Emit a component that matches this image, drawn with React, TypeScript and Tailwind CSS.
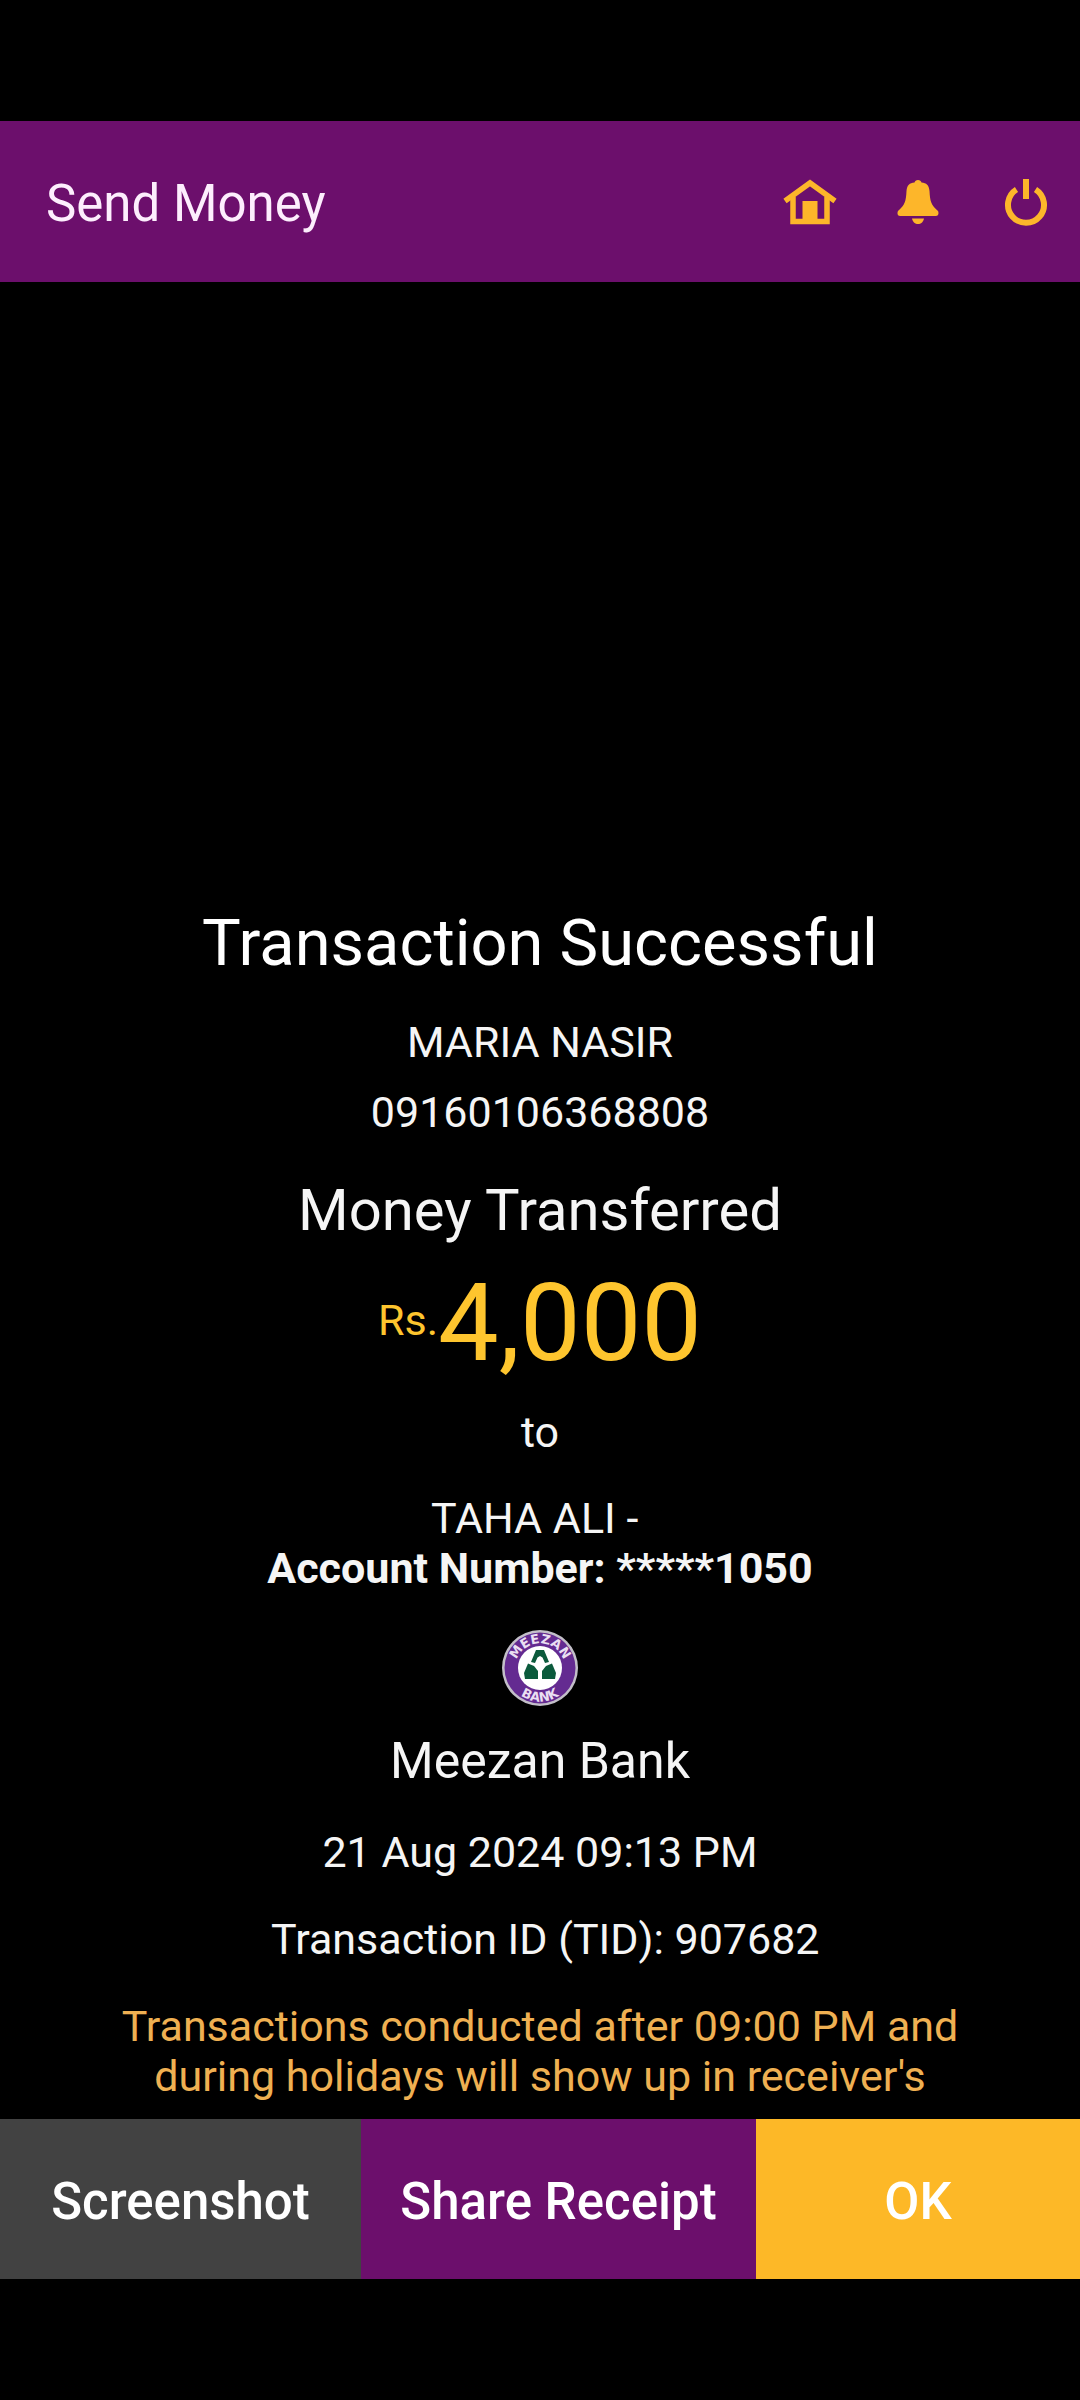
import React from 'react';

function HomeIcon() {
  return (
    <svg viewBox="0 0 54 46" className="h-[46px] w-[54px]" fill="none" aria-hidden="true">
      <path d="M2 22 L27 4 L52 22" stroke="#fdb62a" strokeWidth="5.5" strokeLinejoin="miter" />
      <path d="M10 18 V42.5 H44 V18" stroke="#fdb62a" strokeWidth="5.5" />
      <rect x="19.5" y="22" width="15" height="22" fill="#fdb62a" />
    </svg>
  );
}

function BellIcon() {
  return (
    <svg viewBox="0 0 42 46" className="h-[46px] w-[42px]" fill="#fdb62a" aria-hidden="true">
      <path d="M21 1 C23 1 24 2 24.500 3.500 C29.500 4 32 6 32.500 12 C33 22 34 26 41 32 C42 34 41.500 37 39 37 H3 C0.500 37 0 34 1 32 C8 26 9 22 9.500 12 C10 6 12.500 4 17.500 3.500 C18 2 19 1 21 1 Z" />
      <path d="M15 39.500 H27 C26 43.500 24 45 21 45 C18 45 16 43.500 15 39.500 Z" />
    </svg>
  );
}

function PowerIcon() {
  return (
    <svg viewBox="0 0 44 48" className="h-12 w-11" fill="none" stroke="#fdb62a" strokeWidth="6" aria-hidden="true">
      <path d="M22 1 V21" />
      <path d="M12.500 11.500 A18 18 0 1 0 31.500 11.500" />
    </svg>
  );
}

function BankLogo() {
  return (
    <svg viewBox="0 0 78 78" className="h-[78px] w-[78px]" role="img" aria-label="Meezan Bank">
      <defs>
        <path id="ring-top" d="M20.300 55.200 A24.700 24.700 0 1 1 57.700 55.200" />
        <path id="ring-bottom" d="M5.500 39 A33.500 33.500 0 0 0 72.500 39" />
      </defs>
      <circle cx="39" cy="39" r="38" fill="#c3bfc9" />
      <circle cx="39" cy="39" r="35.500" fill="#642b91" />
      <circle cx="39" cy="39" r="22" fill="#ffffff" />
      <g fill="#0b5a3c">
        <path d="M35 21 H43 L48 33 L44 34 L41.500 28.500 L39 27 L36.500 28.500 L34 34 L30 33 Z" />
        <path d="M27 34.500 L33 37 L37 42 V50 H24 L23 44 Z" />
        <path d="M51 34.500 L45 37 L41 42 V50 H54 L55 44 Z" />
      </g>
      <g fill="#eadff2" fontFamily="DejaVu Sans, sans-serif" fontWeight="700" textAnchor="middle">
        <text fontSize="13">
          <textPath href="#ring-top" startOffset="50%">MEEZAN</textPath>
        </text>
        <text fontSize="13">
          <textPath href="#ring-bottom" startOffset="50%">BANK</textPath>
        </text>
      </g>
    </svg>
  );
}

const iconButton = 'flex h-[60px] w-[60px] items-center justify-center';

export default function App() {
  return (
    <div className="flex min-h-screen flex-col bg-black py-[121px] font-[Roboto,sans-serif] text-[#f5f5f5]">
      <header className="flex h-[161px] items-center justify-between bg-[#6c0f6c] pr-6 pl-[46px]">
        <h1 className="pt-1 text-[51px] leading-[60px] text-[#fdeefd]">Send Money</h1>
        <nav className="flex gap-12">
          <button type="button" aria-label="Home" className={iconButton}>
            <HomeIcon />
          </button>
          <button type="button" aria-label="Notifications" className={iconButton}>
            <BellIcon />
          </button>
          <button type="button" aria-label="Log out" className={iconButton}>
            <PowerIcon />
          </button>
        </nav>
      </header>

      <main className="flex flex-1 flex-col items-center justify-end px-[72px] pb-[18px] text-center text-[43px] leading-[50px]">
        <h2 className="text-[65px] leading-[76px] text-white">Transaction Successful</h2>
        <p className="mt-9">MARIA NASIR</p>
        <p className="mt-5">09160106368808</p>
        <h3 className="mt-[38px] text-[58px] leading-[70px]">Money Transferred</h3>
        <p className="mt-3.5 flex items-center text-[#fec52e]">
          <span className="pb-1.5">Rs.</span>
          <span className="text-[108px] leading-[128px]">4,000</span>
        </p>
        <p className="mt-5">to</p>
        <p className="mt-9">{'TAHA ALI -\u00a0'}</p>
        <p className="font-bold">Account Number: *****1050</p>
        <div className="mt-9">
          <BankLogo />
        </div>
        <p className="mt-6 text-[50px] leading-[60px]">Meezan Bank</p>
        <p className="mt-9">21 Aug 2024 09:13 PM</p>
        <p className="mt-[37px]">{'\u00a0Transaction ID (TID): 907682'}</p>
        <p className="mt-[37px] text-[#efb052]">
          Transactions conducted after 09:00 PM and during holidays will show up in receiver's
        </p>
      </main>

      <footer className="grid h-40 grid-cols-[361fr_395fr_324fr] text-[51px] leading-[60px] font-medium text-white">
        <button type="button" className="bg-[#424242] pt-1.5">Screenshot</button>
        <button type="button" className="bg-[#6c0f6c] pt-1.5">Share Receipt</button>
        <button type="button" className="bg-[#fdb827] pt-1.5">OK</button>
      </footer>
    </div>
  );
}
